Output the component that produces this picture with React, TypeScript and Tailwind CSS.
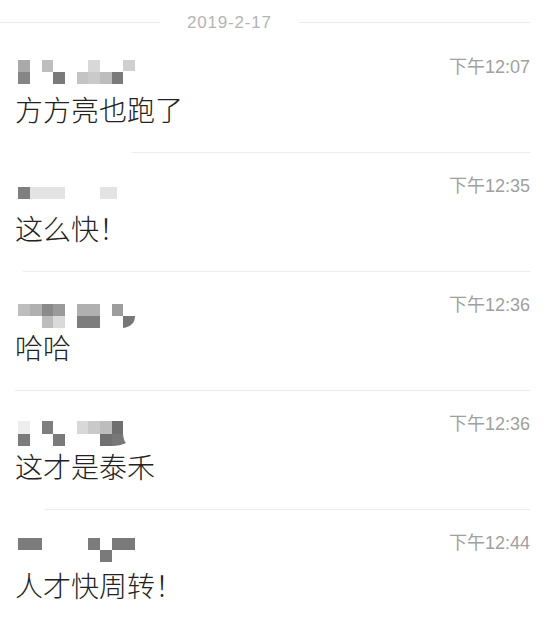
type Cell = { x: number; y: number; w: number; h: number; c: string };

type Message = {
  time: string;
  text: string;
  cells: Cell[];
  tail?: string;
  rule: string;
};

const messages: Message[] = [
  {
    time: '下午12:07',
    text: '方方亮也跑了',
    rule: 'ml-[132px]',
    cells: [
      { x: 18, y: 5, w: 12, h: 12, c: '#a9a9a9' },
      { x: 18, y: 17, w: 12, h: 12, c: '#858585' },
      { x: 42, y: 5, w: 11, h: 12, c: '#bebebe' },
      { x: 53, y: 17, w: 12, h: 12, c: '#7a7a7a' },
      { x: 77, y: 17, w: 11, h: 12, c: '#c4c4c4' },
      { x: 88, y: 5, w: 12, h: 12, c: '#d8d8d8' },
      { x: 88, y: 17, w: 12, h: 12, c: '#cacaca' },
      { x: 100, y: 17, w: 12, h: 12, c: '#bdbdbd' },
      { x: 112, y: 17, w: 11, h: 12, c: '#7a7a7a' },
      { x: 123, y: 5, w: 12, h: 11, c: '#cfcfcf' },
    ],
  },
  {
    time: '下午12:35',
    text: '这么快！',
    rule: 'ml-[23px]',
    cells: [
      { x: 18, y: 13, w: 12, h: 12, c: '#7f7f7f' },
      { x: 30, y: 13, w: 35, h: 12, c: '#e3e3e3' },
      { x: 100, y: 13, w: 17, h: 12, c: '#e3e3e3' },
    ],
  },
  {
    time: '下午12:36',
    text: '哈哈',
    rule: 'ml-[15px]',
    cells: [
      { x: 18, y: 11, w: 12, h: 12, c: '#bdbdbd' },
      { x: 30, y: 11, w: 12, h: 12, c: '#b0b0b0' },
      { x: 42, y: 11, w: 11, h: 12, c: '#8a8a8a' },
      { x: 53, y: 11, w: 12, h: 12, c: '#9a9a9a' },
      { x: 42, y: 23, w: 11, h: 12, c: '#bcbcbc' },
      { x: 53, y: 23, w: 12, h: 12, c: '#dadada' },
      { x: 77, y: 11, w: 23, h: 12, c: '#b0b0b0' },
      { x: 77, y: 23, w: 23, h: 12, c: '#7d7d7d' },
      { x: 112, y: 11, w: 11, h: 12, c: '#9d9d9d' },
    ],
    tail: 'M123 23 H135 Q135 33 123 35 Z',
  },
  {
    time: '下午12:36',
    text: '这才是泰禾',
    rule: 'ml-[45px]',
    cells: [
      { x: 18, y: 9, w: 12, h: 13, c: '#ededed' },
      { x: 18, y: 22, w: 12, h: 12, c: '#7b7b7b' },
      { x: 42, y: 9, w: 11, h: 13, c: '#7e7e7e' },
      { x: 53, y: 22, w: 12, h: 12, c: '#7b7b7b' },
      { x: 77, y: 9, w: 11, h: 13, c: '#d8d8d8' },
      { x: 88, y: 9, w: 12, h: 13, c: '#c9c9c9' },
      { x: 100, y: 9, w: 12, h: 13, c: '#bdbdbd' },
      { x: 112, y: 9, w: 11, h: 13, c: '#6f6f6f' },
      { x: 100, y: 22, w: 12, h: 12, c: '#707070' },
    ],
    tail: 'M112 22 H123 Q124 30 126 31 Q120 34 112 34 Z',
  },
  {
    time: '下午12:44',
    text: '人才快周转！',
    rule: 'hidden',
    cells: [
      { x: 18, y: 7, w: 24, h: 12, c: '#7c7c7c' },
      { x: 88, y: 7, w: 12, h: 12, c: '#7c7c7c' },
      { x: 112, y: 7, w: 23, h: 12, c: '#7a7a7a' },
      { x: 100, y: 19, w: 12, h: 12, c: '#7a7a7a' },
    ],
  },
];

function Mosaic({ cells, tail }: { cells: Cell[]; tail?: string }) {
  return (
    <svg width="150" height="36" viewBox="0 0 150 36" className="block shrink-0">
      {cells.map((cell, i) => (
        <rect key={i} x={cell.x} y={cell.y} width={cell.w} height={cell.h} fill={cell.c} />
      ))}
      {tail && <path d={tail} fill="#777777" />}
    </svg>
  );
}

export default function App() {
  return (
    <div className="w-[550px] h-[636px] overflow-hidden bg-white font-['Liberation_Sans','Noto_Sans_CJK_SC',sans-serif]">
      {/* date separator */}
      <div className="h-[34px] pt-[11px] pr-[20px] flex items-center">
        <div className="w-[160px] h-px bg-[#ececec]" />
        <span className="mx-[27px] text-[17px] leading-none text-[#b4b4b4] tracking-[0.8px]">2019-2-17</span>
        <div className="flex-1 h-px bg-[#ececec]" />
      </div>

      {messages.map((m, i) => (
        <div key={i} className="h-[119px] flex flex-col pt-[21px] pr-[20px]">
          <div className="h-[36px] flex items-start justify-between">
            <Mosaic cells={m.cells} tail={m.tail} />
            <span className="text-[18px] leading-[24px] text-[#a0a0a0]">{m.time}</span>
          </div>
          <p className="pl-[15px] text-[28px] leading-[36px] text-[#222222] font-light font-['Noto_Sans_CJK_SC',sans-serif]">
            {m.text}
          </p>
          <div className={`mt-auto h-px bg-[#ececec] ${m.rule}`} />
        </div>
      ))}
    </div>
  );
}
